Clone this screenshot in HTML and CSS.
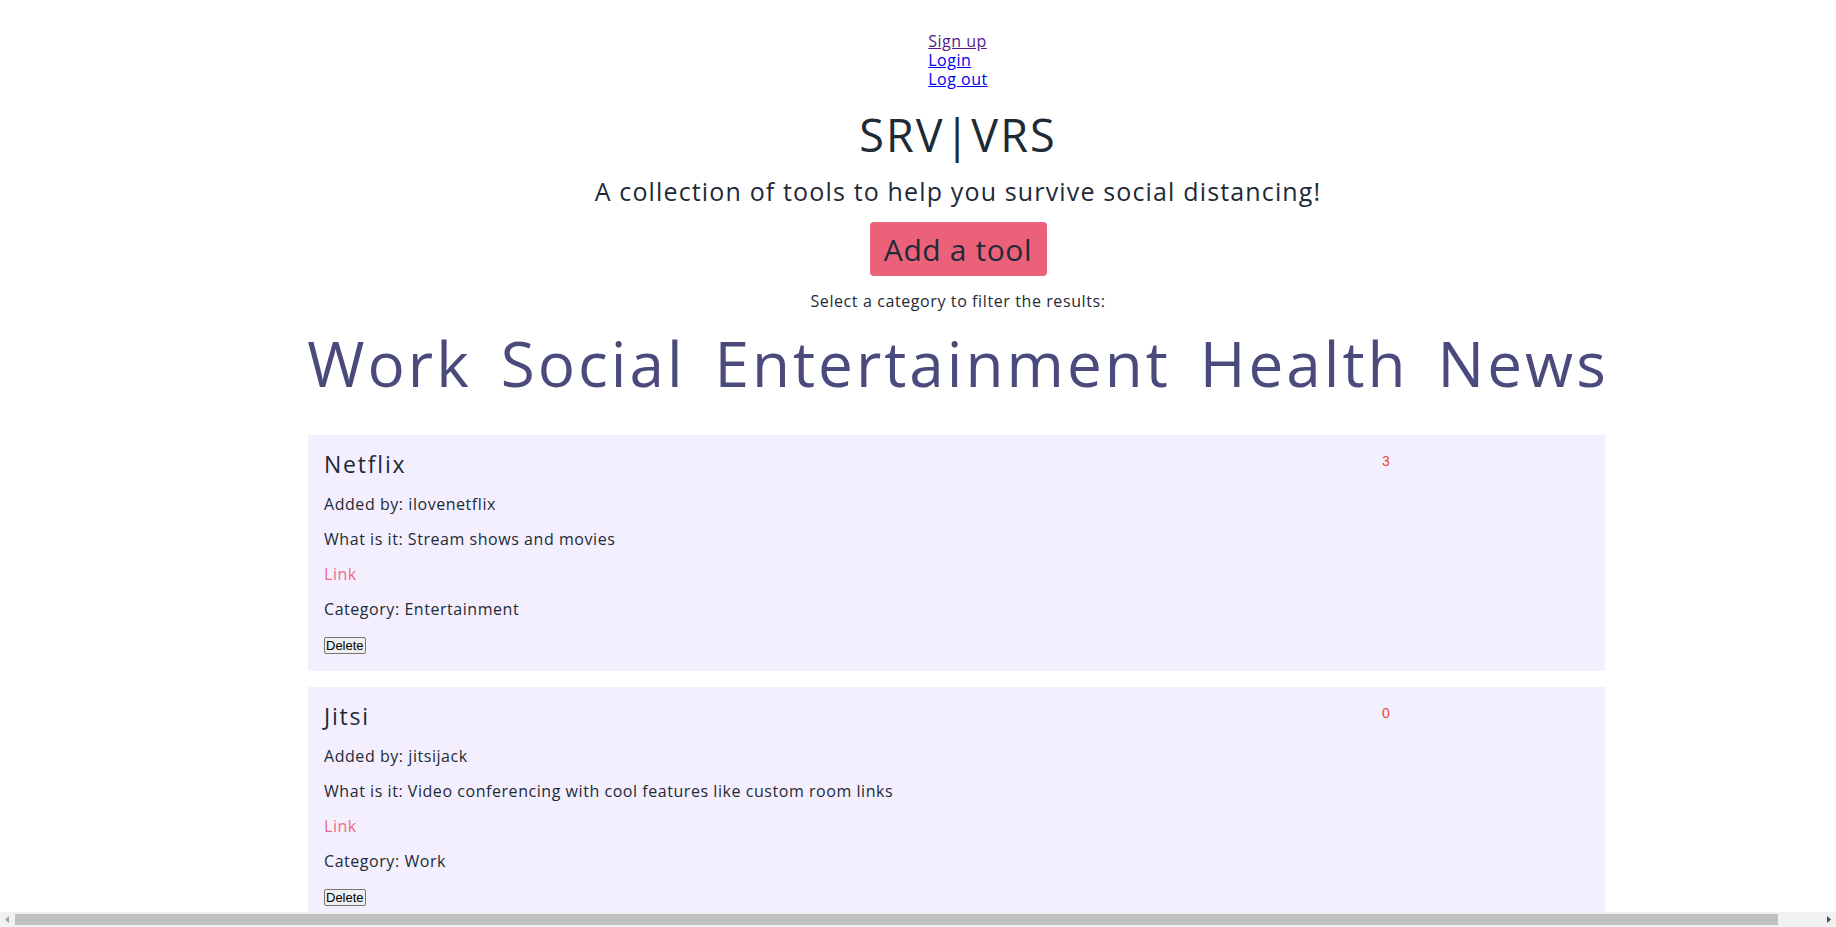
FILE: index.html
```html
<!DOCTYPE html>
<html lang="en">
<head>
<meta charset="utf-8">
<title>SRV|VRS</title>
<link rel="stylesheet" href="styles.css">
</head>
<body>
<div class="page">
  <header class="header">
    <nav class="auth">
      <a href="#" class="visited">Sign up</a>
      <a href="#">Login</a>
      <a href="#">Log out</a>
    </nav>
    <h1 class="title">SRV|VRS</h1>
    <p class="subtitle">A collection of tools to help you survive social distancing!</p>
    <button class="add-btn">Add a tool</button>
    <p class="hint">Select a category to filter the results:</p>
    <div class="categories">
      <a href="#">Work</a>
      <a href="#">Social</a>
      <a href="#">Entertainment</a>
      <a href="#">Health</a>
      <a href="#">News</a>
    </div>
  </header>
  <main class="list">
    <article class="card">
      <div class="card-body">
        <h2 class="card-title">Netflix</h2>
        <p>Added by: ilovenetflix</p>
        <p>What is it: Stream shows and movies</p>
        <p><a href="#" class="tool-link">Link</a></p>
        <p>Category: Entertainment</p>
        <button class="delete">Delete</button>
      </div>
      <div class="votes">3</div>
    </article>
    <article class="card">
      <div class="card-body">
        <h2 class="card-title">Jitsi</h2>
        <p>Added by: jitsijack</p>
        <p>What is it: Video conferencing with cool features like custom room links</p>
        <p><a href="#" class="tool-link">Link</a></p>
        <p>Category: Work</p>
        <button class="delete">Delete</button>
      </div>
      <div class="votes">0</div>
    </article>
  </main>
</div>
<div class="hscroll" aria-hidden="true">
  <span class="hs-arrow">
    <svg width="15" height="15" viewBox="0 0 15 15"><path d="M5 7.5 L9 4 L9 11 Z" fill="#a3a3a3"/></svg>
  </span>
  <span class="hs-track"><span class="hs-thumb"></span></span>
  <span class="hs-arrow">
    <svg width="15" height="15" viewBox="0 0 15 15"><path d="M10 7.5 L6 4 L6 11 Z" fill="#505050"/></svg>
  </span>
</div>
</body>
</html>
```
FILE: styles.css
```css
body {
  margin: 8px;
  font-family: "Open Sans", "Noto Sans", sans-serif;
  color: #1e2a36;
}
.page {
  width: 100%;
  margin-left: 40px;
}
.header {
  display: flex;
  flex-direction: column;
  align-items: center;
  text-align: center;
}
.auth {
  display: flex;
  flex-direction: column;
  align-items: flex-start;
  margin-top: 24px;
  font-size: 16px;
  line-height: 19px;
  letter-spacing: 0.5px;
}
.auth a { color: #0000ee; }
.auth a.visited { color: #551a8b; }
.title {
  margin: 19px 0 0;
  font-size: 45px;
  font-weight: 400;
  line-height: 53px;
  letter-spacing: 2px;
}
.subtitle {
  margin: 16px 0 0;
  font-size: 25px;
  line-height: 28px;
  letter-spacing: 1.15px;
}
.add-btn {
  margin-top: 17px;
  width: 177px;
  height: 54px;
  padding: 0;
  border: none;
  border-radius: 4px;
  background: #ec617a;
  color: #1e2a36;
  font-family: inherit;
  font-size: 30px;
  letter-spacing: 0.6px;
}
.hint {
  margin: 16px 0 0;
  font-size: 16px;
  line-height: 19px;
  letter-spacing: 0.6px;
}
.categories {
  display: flex;
  gap: 29px;
  margin-top: 15px;
  font-size: 62px;
  line-height: 75px;
  letter-spacing: 3px;
}
.categories a {
  color: #4a4a7d;
  text-decoration: none;
}
.list {
  display: flex;
  flex-direction: column;
  gap: 16px;
  width: 1297px;
  margin: 34px 0 0 260px;
}
.card {
  display: grid;
  grid-template-columns: 1058px 1fr;
  padding: 16px 16px 17px;
  background: #f3effe;
}
.card-title {
  margin: -1px 0 17px;
  font-size: 23px;
  font-weight: 400;
  line-height: 28px;
  letter-spacing: 1.8px;
}
.card-body p {
  margin: 16px 0;
  font-size: 16px;
  line-height: 19px;
  letter-spacing: 0.55px;
}
.card-body h2 + p { margin-top: 0; }
.card-body p + .delete { margin-top: 18px; }
.tool-link {
  color: #ee6b85;
  text-decoration: none;
}
.delete {
  display: block;
  padding: 0 1px;
  font-family: "Liberation Sans", Arial, sans-serif;
  font-size: 13px;
  line-height: 15px;
  color: #000;
  background: #efefef;
  border: 1px solid #767676;
  border-radius: 2px;
}
.votes {
  padding-top: 2px;
  font-family: "Liberation Sans", Arial, sans-serif;
  font-size: 14px;
  line-height: 16px;
  color: #f0462b;
}
.hscroll {
  position: fixed;
  left: 0;
  right: 0;
  bottom: 0;
  height: 15px;
  display: flex;
  background: #f1f1f1;
}
.hs-arrow {
  width: 15px;
  height: 15px;
  flex: none;
}
.hs-arrow svg { display: block; }
.hs-track {
  flex: 1;
  display: flex;
  align-items: center;
}
.hs-thumb {
  width: 1763px;
  height: 11px;
  background: #c1c1c1;
}
```
